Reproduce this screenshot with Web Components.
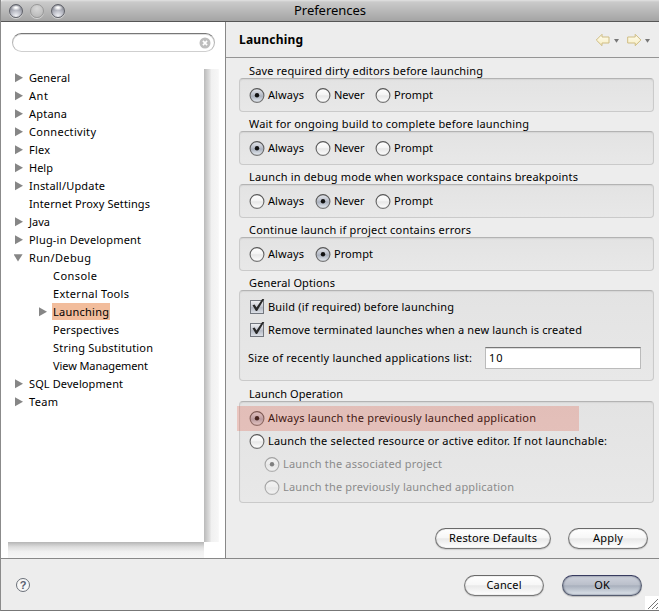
<!DOCTYPE html>
<html lang="en">
<head>
<meta charset="utf-8">
<title>Preferences</title>
<style>
html, body { margin: 0; height: 611px; overflow: hidden; }
body { font: 11px/18px "Noto Sans", "Open Sans", sans-serif; color: #000; background: #ededed; }
</style>
</head>
<body>
<pref-window></pref-window>
<script>
const define = (name, html, setup) => customElements.define(name, class extends HTMLElement {
  connectedCallback() {
    if (this.shadowRoot) return;
    const root = this.attachShadow({ mode: 'open' });
    const t = document.createElement('template');
    t.innerHTML = html;
    root.append(t.content.cloneNode(true));
    if (setup) setup(this, root);
  }
});

/* Text tracked out to a given advance width. */
define('fit-text', `<style>:host{display:block;white-space:nowrap;flex:none}span{display:inline-block}</style><span></span>`, (el, root) => {
  const s = root.querySelector('span');
  s.textContent = el.getAttribute('t');
  const w = +el.getAttribute('w');
  s.style.letterSpacing = '0px';
  const natural = s.getBoundingClientRect().width;
  const track = (w - natural) / (s.textContent.length - 1);
  s.style.letterSpacing = track.toFixed(3) + 'px';
  s.style.marginRight = (-track).toFixed(3) + 'px';
});

define('title-bar', `<style>
:host{display:grid;grid-template-columns:1fr auto 1fr;align-items:center;height:21px;box-sizing:border-box;background:linear-gradient(#e2e2e2 0,#cacaca 2px,#b9b9b9 50%,#a4a4a4 100%);box-shadow:0 1px #565656;font-size:13px;border-radius:3px 0 0 0}
.l{display:flex;gap:7px;padding-left:8px;padding-top:1px}
i{width:14px;height:14px;border-radius:50%;box-sizing:border-box;border:1px solid #5f6169;background:radial-gradient(ellipse 5px 3px at 50% 22%,#fff 20%,transparent),radial-gradient(circle at 50% 90%,#f0f1f5 0,#b6b8c2 45%,#777983 90%);box-shadow:0 1px #d5d5d5}
i.off{border-color:#989898;background:radial-gradient(circle at 50% 30%,#d8d8d8,#bebebe 70%)}
fit-text{margin-top:-2px}
</style><div class="l"><i></i><i class="off"></i><i></i></div><fit-text t="Preferences" w="72"></fit-text><span></span>`);

define('search-field', `<style>
:host{display:flex;align-items:center;justify-content:flex-end;height:19px;box-sizing:border-box;border:1px solid #b5b5b5;border-top-color:#777;border-bottom-color:#cfcfcf;border-radius:10px;background:#fff;box-shadow:inset 0 1px #dedede;padding-right:3px}
svg{display:block}
</style><svg width="12" height="12" viewBox="0 0 12 12"><circle cx="6" cy="6" r="5.5" fill="#bdbdbd"/><path d="M3.9 3.9l4.2 4.2M8.1 3.9L3.9 8.1" stroke="#fff" stroke-width="1.6"/></svg>`);

define('tree-item', `<style>
:host{display:flex;align-items:center;height:18px;padding-left:14px}
:host([level="2"]){padding-left:38px}
svg{width:15px;height:18px;flex:none;display:block;margin-left:-1px}
fit-text{height:18px}
:host([marked]) .t{background:#f2bd9c;height:17px;margin:-1px -1px 0;padding:0 1px;line-height:18px}
.t{height:18px}
</style><svg viewBox="0 0 15 18"><path fill="#868686"/></svg><div class="t"><fit-text></fit-text></div>`, (el, root) => {
  const a = el.getAttribute('arrow'), p = root.querySelector('path');
  if (a === 'right') p.setAttribute('d', 'M1 4.2L9 8.7L1 13.2Z');
  else if (a === 'down') p.setAttribute('d', 'M-.5 5.2H8.6L4 12.6Z');
  const f = document.createElement('fit-text');
  f.setAttribute('t', el.getAttribute('t')); f.setAttribute('w', el.getAttribute('w'));
  root.querySelector('fit-text').replaceWith(f);
});

define('tree-pane', `<style>
:host{display:grid;grid-template-columns:196px 15px;grid-template-rows:473px 16px;margin-left:7px}
.v{background:linear-gradient(90deg,#bababa,#dcdcdc 35%,#f1f1f1 50%,#f6f6f6 93%,#fafafa)}
.h{background:linear-gradient(#b5b5b5,#dcdcdc 30%,#f0f0f0 60%,#f6f6f6)}
.items{display:flex;flex-direction:column;margin-left:-7px;min-width:0}
</style><div class="items"><slot></slot></div><div class="v"></div><div class="h"></div>`);

define('radio-button', `<style>
:host{display:flex;align-items:center;height:18px}
svg{display:block;flex:none;width:16px;height:16px;margin-right:3px}
:host([disabled]){color:#8b8b8b}
:host([disabled]) svg{opacity:.48}
</style><svg viewBox="0 0 16 16"><defs>
<linearGradient id="w" x1="0" y1="0" x2="0" y2="1"><stop stop-color="#fff"/><stop offset=".45" stop-color="#f4f4f4"/><stop offset=".52" stop-color="#e7e7e7"/><stop offset="1" stop-color="#fff"/></linearGradient>
<linearGradient id="b" x1="0" y1="0" x2="0" y2="1"><stop stop-color="#e6e8ed"/><stop offset=".45" stop-color="#b9bec9"/><stop offset=".55" stop-color="#aab1bd"/><stop offset="1" stop-color="#e9eef4"/></linearGradient>
<linearGradient id="s" x1="0" y1="0" x2="0" y2="1"><stop stop-color="#555"/><stop offset="1" stop-color="#777"/></linearGradient></defs>
<circle class="o" cx="8" cy="8.5" r="6.9" fill="url(#w)" stroke="url(#s)" stroke-width="1.15"/><circle class="d" cx="8" cy="8.2" r="2.2" fill="#111"/></svg><slot></slot>`, (el, root) => {
  if (el.hasAttribute('checked')) { if (!el.hasAttribute('disabled')) root.querySelector('.o').setAttribute('fill', 'url(#b)'); }
  else root.querySelector('.d').remove();
});

define('check-box', `<style>
:host{display:flex;align-items:center;height:18px}
svg{display:block;flex:none;width:17px;height:18px;margin-right:2px}
</style><svg viewBox="0 0 17 18"><defs><linearGradient id="c" x1="0" y1="0" x2="0" y2="1"><stop stop-color="#f2f3f5"/><stop offset=".45" stop-color="#c9ccd5"/><stop offset=".55" stop-color="#b5bac5"/><stop offset="1" stop-color="#dfe3e9"/></linearGradient></defs>
<rect x="1.5" y="2.5" width="13" height="13" fill="url(#c)" stroke="#73777f"/><path d="M3.5 7.2L5.6 6.4L7.5 9.4L13.2 1H15.3L8.1 13H6.9Z" fill="#292929"/></svg><slot></slot>`);

define('option-group', `<style>
:host{display:block}
.label{height:18px;padding:0 0 0 10px}
.box{box-sizing:border-box;height:var(--h,34px);border:1px solid #cacaca;border-top-color:#b3b3b3;border-radius:4px;background:linear-gradient(#e3e3e3,#e8e8e8);box-shadow:inset 0 1px 1px #d5d5d5;margin-top:-2px}
</style><div class="label"><slot name="label"></slot></div><div class="box"><slot></slot></div>`);

define('radio-row', `<style>:host{display:grid;grid-template-columns:66px 60px auto;padding:7px 0 0 9px;justify-content:start}</style><slot></slot>`);

define('push-button', `<style>
:host{display:flex;align-items:center;justify-content:center;box-sizing:border-box;width:80px;height:21px;border:1px solid #777;border-top-color:#696969;border-radius:11px;background:linear-gradient(#fff,#f7f7f7 45%,#e9e9e9 52%,#fff);box-shadow:inset 0 0 1px #777,0 1px 1px #ccc;line-height:18px;padding-bottom:1px}
:host([primary]){border-color:#555c70;border-top-color:#383c60;background:linear-gradient(#ced2dc,#bbc0cb 45%,#a9b0bd 52%,#dfe6ed);box-shadow:inset 0 0 2px #4e566b,0 1px 1px #bbb}
</style><slot></slot>`);

define('nav-arrows', `<style>:host{display:block}svg{display:block}</style>
<svg width="56" height="16" viewBox="0 0 56 16"><defs><linearGradient id="y" x1="0" y1="0" x2="0" y2="1"><stop stop-color="#fffdf0"/><stop offset="1" stop-color="#f7edc2"/></linearGradient></defs>
<g fill="url(#y)" stroke="#cfbd83" stroke-linejoin="round"><path d="M1.3 8L7 2.3V5H14V11H7V13.7Z"/><path d="M45.9 8L40.2 2.3V5H32.7V11H40.2V13.7Z"/></g>
<path d="M19 7H24L21.5 10.7ZM50 7H55L52.5 10.7Z" fill="#777"/></svg>`);

define('launch-page', `<style>
:host{display:flex;flex-direction:column;background:#ededed;min-width:0}
header{display:flex;align-items:center;justify-content:space-between;height:35px;border-bottom:1px solid #959595;padding:0 8px 0 13px;font-size:12px;font-weight:700}
nav-arrows{margin-top:1px}
.page{padding:4px 5px 0 13px;display:flex;flex-direction:column;gap:3px}
.gen{--h:91px}.op{--h:102px}
.checks{padding:7px 0 0 9px;display:flex;flex-direction:column;gap:5px}
.size{display:flex;align-items:center;padding:8px 12px 0 8px;height:22px;justify-content:space-between}
.field{box-sizing:border-box;width:156px;height:22px;border:1px solid #bbb;border-top-color:#777;background:#fff;padding-left:3px;line-height:19px;box-shadow:inset 0 1px #ddd}
.op{margin-top:1px}
.ops{padding:7px 0 0 9px;display:grid;gap:5px}
.hi{position:relative}
.hi::after{content:"";position:absolute;left:-12px;top:-3px;width:342px;height:25px;background:rgba(224,94,69,.27)}
.sub{padding-left:15px;display:grid;gap:5px}
.buttons{display:flex;justify-content:flex-end;gap:17px;padding:25px 11px 0 0}
.restore{width:116px}
</style>
<header><fit-text t="Launching" w="64"></fit-text><nav-arrows></nav-arrows></header>
<div class="page">
<option-group><fit-text slot="label" t="Save required dirty editors before launching" w="234"></fit-text><radio-row><radio-button checked><fit-text t="Always" w="36"></fit-text></radio-button><radio-button><fit-text t="Never" w="30.5"></fit-text></radio-button><radio-button><fit-text t="Prompt" w="39"></fit-text></radio-button></radio-row></option-group>
<option-group><fit-text slot="label" t="Wait for ongoing build to complete before launching" w="280"></fit-text><radio-row><radio-button checked><fit-text t="Always" w="36"></fit-text></radio-button><radio-button><fit-text t="Never" w="30.5"></fit-text></radio-button><radio-button><fit-text t="Prompt" w="39"></fit-text></radio-button></radio-row></option-group>
<option-group><fit-text slot="label" t="Launch in debug mode when workspace contains breakpoints" w="329"></fit-text><radio-row><radio-button><fit-text t="Always" w="36"></fit-text></radio-button><radio-button checked><fit-text t="Never" w="30.5"></fit-text></radio-button><radio-button><fit-text t="Prompt" w="39"></fit-text></radio-button></radio-row></option-group>
<option-group><fit-text slot="label" t="Continue launch if project contains errors" w="222"></fit-text><radio-row><radio-button><fit-text t="Always" w="36"></fit-text></radio-button><radio-button checked><fit-text t="Prompt" w="39"></fit-text></radio-button></radio-row></option-group>
<option-group class="gen"><fit-text slot="label" t="General Options" w="86"></fit-text>
<div class="checks"><check-box><fit-text t="Build (if required) before launching" w="186"></fit-text></check-box><check-box><fit-text t="Remove terminated launches when a new launch is created" w="314"></fit-text></check-box></div>
<div class="size"><fit-text t="Size of recently launched applications list:" w="224"></fit-text><div class="field"><fit-text t="10" w="13.5"></fit-text></div></div></option-group>
<option-group class="op"><fit-text slot="label" t="Launch Operation" w="94"></fit-text>
<div class="ops"><radio-button class="hi" checked><fit-text t="Always launch the previously launched application" w="268"></fit-text></radio-button><radio-button><fit-text t="Launch the selected resource or active editor. If not launchable:" w="339"></fit-text></radio-button>
<div class="sub"><radio-button disabled checked><fit-text t="Launch the associated project" w="159"></fit-text></radio-button><radio-button disabled><fit-text t="Launch the previously launched application" w="231"></fit-text></radio-button></div></div></option-group>
</div>
<div class="buttons"><push-button class="restore"><fit-text t="Restore Defaults" w="88"></fit-text></push-button><push-button><fit-text t="Apply" w="30"></fit-text></push-button></div>`);

const rows = [['General',41,'right'],['Ant',19,'right'],['Aptana',38,'right'],['Connectivity',67,'right'],['Flex',21,'right'],['Help',24,'right'],['Install/Update',76,'right'],['Internet Proxy Settings',121,''],['Java',21,'right'],['Plug-in Development',112,'right'],['Run/Debug',62,'down'],['Console',44,'',2],['External Tools',76,'',2],['Launching',56,'right',2,1],['Perspectives',66,'',2],['String Substitution',100,'',2],['View Management',95,'',2],['SQL Development',94,'right'],['Team',29,'right']];

define('pref-window', `<style>
:host{display:grid;grid-template-rows:22px 536px 1fr;width:659px;height:611px;box-sizing:border-box;border-left:1px solid #8b8b8b;border-bottom:1px solid #777;background:#ededed}
main{display:grid;grid-template-columns:224px 1fr}
.left{background:#fff;padding-top:11px;position:relative;z-index:0}
search-field{margin:0 10px 17px 11px}
launch-page{border-left:1px solid #888}
footer{border-top:1px solid #888;display:flex;align-items:flex-start;padding:16px 17px 0 15px;position:relative}
.help{margin:3px auto 0 0;display:grid;place-items:center;width:12px;height:12px;border:1px solid #6b7079;border-radius:50%;color:#596070;font:700 11px/12px "Liberation Sans",sans-serif;background:#f7f7f7}
.b{display:flex;gap:18px}
.grip{position:absolute;right:0;bottom:0;background:#fff}
</style><title-bar></title-bar>
<main><div class="left"><search-field></search-field><tree-pane>${rows.map(r => `<tree-item t="${r[0]}" w="${r[1]}" arrow="${r[2]}" level="${r[3] || 1}" ${r[4] ? 'marked' : ''}></tree-item>`).join('')}</tree-pane></div><launch-page></launch-page></main>
<footer><span class="help">?</span><div class="b"><push-button><fit-text t="Cancel" w="35"></fit-text></push-button><push-button primary><fit-text t="OK" w="15.5"></fit-text></push-button></div>
<svg class="grip" width="14" height="14" viewBox="0 0 14 14"><path d="M3 13L13 3M7 13L13 7M11 13L13 11" stroke="#777" fill="none"/></svg></footer>`);
</script>
</body>
</html>
